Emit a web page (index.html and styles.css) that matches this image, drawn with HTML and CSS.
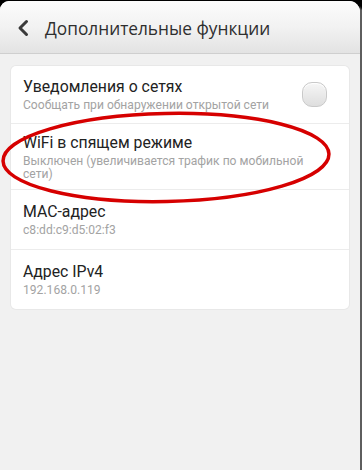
FILE: index.html
```html
<!DOCTYPE html>
<html lang="ru">
<head>
<meta charset="utf-8">
<link rel="stylesheet" href="styles.css">
</head>
<body>
<div class="frame">
  <div class="screen">
    <header class="header">
      <svg class="back" width="14" height="18" viewBox="0 0 14 18"><path d="M10.5 2.5 L4 9 L10.5 15.5" fill="none" stroke="#3a3a3a" stroke-width="3" stroke-linecap="round" stroke-linejoin="round"/></svg>
      <h1 class="title">Дополнительные функции</h1>
    </header>
    <div class="card">
      <div class="row row-toggle">
        <div class="text">
          <div class="row-title">Уведомления о сетях</div>
          <div class="row-sub">Сообщать при обнаружении открытой сети</div>
        </div>
        <div class="toggle"></div>
      </div>
      <div class="row row-tall">
        <div class="text">
          <div class="row-title">WiFi в спящем режиме</div>
          <div class="row-sub">Выключен (увеличивается трафик по мобильной сети)</div>
        </div>
      </div>
      <div class="row">
        <div class="text">
          <div class="row-title">MAC-адрес</div>
          <div class="row-sub">c8:dd:c9:d5:02:f3</div>
        </div>
      </div>
      <div class="row row-last">
        <div class="text">
          <div class="row-title">Адрес IPv4</div>
          <div class="row-sub">192.168.0.119</div>
        </div>
      </div>
    </div>
    <svg class="mark" width="360" height="470" viewBox="0 0 360 470"><ellipse cx="166" cy="157.5" rx="163" ry="44" transform="rotate(-1.2 166 157.5)" fill="none" stroke="#d60000" stroke-width="3.5"/></svg>
  </div>
</div>
</body>
</html>
```
FILE: styles.css
```css
html, body {
  margin: 0;
  padding: 0;
  background: #000;
}
.frame {
  width: 362px;
  height: 470px;
  padding-top: 1px;
  box-sizing: border-box;
  background: linear-gradient(to bottom, #000 0, #000 6px, #5e5e5e 10px);
  border-top-right-radius: 10px;
}
.screen {
  position: relative;
  width: 360px;
  height: 469px;
  background: #f1f1f1;
  border-top-left-radius: 9px;
  border-top-right-radius: 11px;
  overflow: hidden;
  font-family: Roboto, "Noto Sans", sans-serif;
}
.header {
  height: 53px;
  box-sizing: border-box;
  display: flex;
  align-items: center;
  padding-left: 16px;
  background: linear-gradient(to bottom, #fcfcfc 0%, #f2f2f2 50%, #e3e3e3 100%);
  border-bottom: 1px solid #cfcfcf;
}
.back {
  display: block;
  margin-right: 15px;
  margin-top: 2px;
}
.title {
  margin: 0;
  font-family: "Open Sans", Roboto, sans-serif;
  font-size: 17.3px;
  font-weight: 400;
  color: #2e2e2e;
  margin-top: 2px;
}
.card {
  margin: 12px 11px 0 11px;
  background: #fff;
  border-radius: 5px;
  box-shadow: 0 0 0 1px #e8e8e8;
}
.row {
  display: flex;
  align-items: center;
  min-height: 60px;
  box-sizing: border-box;
  padding: 8px 36px 8px 12px;
  border-bottom: 1px solid #ececec;
}
.row-toggle {
  min-height: 58px;
  padding-right: 22px;
}
.row-tall {
  min-height: 64px;
  padding-top: 9px;
}
.row-last {
  border-bottom: none;
  min-height: 59px;
}
.text {
  flex: 1;
  display: flex;
  flex-direction: column;
  gap: 3px;
}
.row-title {
  font-size: 15.8px;
  line-height: 19px;
  color: #222;
}
.row-sub {
  font-size: 12.1px;
  line-height: 13px;
  color: #a3a3a3;
}
.toggle {
  width: 25px;
  height: 25px;
  box-sizing: border-box;
  border-radius: 10px;
  border: 1px solid #c9c9c9;
  background: linear-gradient(to bottom, #f6f6f6, #dedede);
  box-shadow: inset 0 1px 1px #fff;
}
.mark {
  position: absolute;
  left: 0;
  top: -1px;
  pointer-events: none;
}
```
